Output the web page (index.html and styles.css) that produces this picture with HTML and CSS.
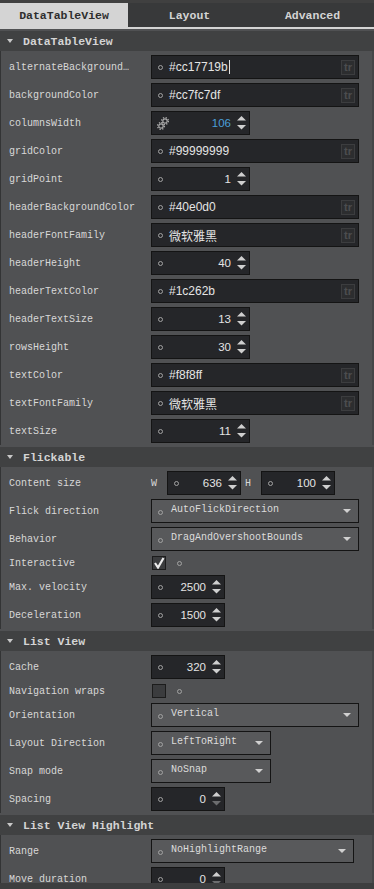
FILE: index.html
```html
<!DOCTYPE html>
<html lang="en">

<head>
    <meta charset="UTF-8">
    <meta name="viewport" content="width=device-width, initial-scale=1.0">
    <title>Properties</title>
    <link rel="stylesheet" href="styles.css">
</head>

<body>
    <div class="panel">
        <div class="tabs">
            <div class="tab active">DataTableView</div>
            <div class="tab">Layout</div>
            <div class="tab">Advanced</div>
        </div>

        <!-- DataTableView -->
        <div class="group">
            <div class="group-head"><span class="caret"></span>DataTableView</div>
            <div class="group-body">
                <div class="row">
                    <span class="label" title="alternateBackgroundColor">alternateBackground…</span>
                    <div class="field wide"><span class="dot"></span><span class="value">#cc17719b</span><span class="cursor"></span><span class="tr">tr</span></div>
                </div>
                <div class="row">
                    <span class="label">backgroundColor</span>
                    <div class="field wide"><span class="dot"></span><span class="value">#cc7fc7df</span><span class="tr">tr</span></div>
                </div>
                <div class="row">
                    <span class="label">columnsWidth</span>
                    <div class="field spin">
                        <svg class="link" width="12" height="13" viewBox="0 0 12 13">
                            <circle cx="8" cy="4" r="2.2" fill="none" stroke="#a8a8a8" stroke-width="1.2"/>
                            <circle cx="8" cy="4" r="3.4" fill="none" stroke="#a8a8a8" stroke-width="1.4" stroke-dasharray="1.3 1.4"/>
                            <circle cx="4" cy="9" r="2.2" fill="none" stroke="#a8a8a8" stroke-width="1.2"/>
                            <circle cx="4" cy="9" r="3.4" fill="none" stroke="#a8a8a8" stroke-width="1.4" stroke-dasharray="1.3 1.4"/>
                        </svg>
                        <span class="num bound">106</span>
                        <svg class="arrows" width="9" height="14" viewBox="0 0 9 14"><path d="M4.5 0 L9 4.5 H0 Z"/><path d="M0 9 H9 L4.5 13.5 Z"/></svg>
                    </div>
                </div>
                <div class="row">
                    <span class="label">gridColor</span>
                    <div class="field wide"><span class="dot"></span><span class="value">#99999999</span><span class="tr">tr</span></div>
                </div>
                <div class="row">
                    <span class="label">gridPoint</span>
                    <div class="field spin"><span class="dot"></span><span class="num">1</span>
                        <svg class="arrows" width="9" height="14" viewBox="0 0 9 14"><path d="M4.5 0 L9 4.5 H0 Z"/><path d="M0 9 H9 L4.5 13.5 Z"/></svg>
                    </div>
                </div>
                <div class="row">
                    <span class="label">headerBackgroundColor</span>
                    <div class="field wide"><span class="dot"></span><span class="value">#40e0d0</span><span class="tr">tr</span></div>
                </div>
                <div class="row">
                    <span class="label">headerFontFamily</span>
                    <div class="field wide"><span class="dot"></span><span class="value cjk">微软雅黑</span><span class="tr">tr</span></div>
                </div>
                <div class="row">
                    <span class="label">headerHeight</span>
                    <div class="field spin"><span class="dot"></span><span class="num">40</span>
                        <svg class="arrows" width="9" height="14" viewBox="0 0 9 14"><path d="M4.5 0 L9 4.5 H0 Z"/><path d="M0 9 H9 L4.5 13.5 Z"/></svg>
                    </div>
                </div>
                <div class="row">
                    <span class="label">headerTextColor</span>
                    <div class="field wide"><span class="dot"></span><span class="value">#1c262b</span><span class="tr">tr</span></div>
                </div>
                <div class="row">
                    <span class="label">headerTextSize</span>
                    <div class="field spin"><span class="dot"></span><span class="num">13</span>
                        <svg class="arrows" width="9" height="14" viewBox="0 0 9 14"><path d="M4.5 0 L9 4.5 H0 Z"/><path d="M0 9 H9 L4.5 13.5 Z"/></svg>
                    </div>
                </div>
                <div class="row">
                    <span class="label">rowsHeight</span>
                    <div class="field spin"><span class="dot"></span><span class="num">30</span>
                        <svg class="arrows" width="9" height="14" viewBox="0 0 9 14"><path d="M4.5 0 L9 4.5 H0 Z"/><path d="M0 9 H9 L4.5 13.5 Z"/></svg>
                    </div>
                </div>
                <div class="row">
                    <span class="label">textColor</span>
                    <div class="field wide"><span class="dot"></span><span class="value">#f8f8ff</span><span class="tr">tr</span></div>
                </div>
                <div class="row">
                    <span class="label">textFontFamily</span>
                    <div class="field wide"><span class="dot"></span><span class="value cjk">微软雅黑</span><span class="tr">tr</span></div>
                </div>
                <div class="row">
                    <span class="label">textSize</span>
                    <div class="field spin"><span class="dot"></span><span class="num">11</span>
                        <svg class="arrows" width="9" height="14" viewBox="0 0 9 14"><path d="M4.5 0 L9 4.5 H0 Z"/><path d="M0 9 H9 L4.5 13.5 Z"/></svg>
                    </div>
                </div>
            </div>
        </div>

        <!-- Flickable -->
        <div class="group">
            <div class="group-head"><span class="caret"></span>Flickable</div>
            <div class="group-body">
                <div class="row">
                    <span class="label">Content size</span>
                    <span class="axis">W</span>
                    <div class="field spin short"><span class="dot"></span><span class="num">636</span>
                        <svg class="arrows" width="9" height="14" viewBox="0 0 9 14"><path d="M4.5 0 L9 4.5 H0 Z"/><path d="M0 9 H9 L4.5 13.5 Z"/></svg>
                    </div>
                    <span class="axis gap">H</span>
                    <div class="field spin short"><span class="dot"></span><span class="num">100</span>
                        <svg class="arrows" width="9" height="14" viewBox="0 0 9 14"><path d="M4.5 0 L9 4.5 H0 Z"/><path d="M0 9 H9 L4.5 13.5 Z"/></svg>
                    </div>
                </div>
                <div class="row">
                    <span class="label">Flick direction</span>
                    <div class="field combo wide"><span class="dot"></span><span class="choice">AutoFlickDirection</span><span class="drop"></span></div>
                </div>
                <div class="row">
                    <span class="label">Behavior</span>
                    <div class="field combo wide"><span class="dot"></span><span class="choice">DragAndOvershootBounds</span><span class="drop"></span></div>
                </div>
                <div class="row check">
                    <span class="label">Interactive</span>
                    <span class="box">
                        <svg width="12" height="12" viewBox="0 0 12 12"><path d="M2 6 L5 10.5 L10.5 1" fill="none" stroke="#ececec" stroke-width="2.2"/></svg>
                    </span>
                    <span class="dot after"></span>
                </div>
                <div class="row">
                    <span class="label">Max. velocity</span>
                    <div class="field spin short"><span class="dot"></span><span class="num">2500</span>
                        <svg class="arrows" width="9" height="14" viewBox="0 0 9 14"><path d="M4.5 0 L9 4.5 H0 Z"/><path d="M0 9 H9 L4.5 13.5 Z"/></svg>
                    </div>
                </div>
                <div class="row">
                    <span class="label">Deceleration</span>
                    <div class="field spin short"><span class="dot"></span><span class="num">1500</span>
                        <svg class="arrows" width="9" height="14" viewBox="0 0 9 14"><path d="M4.5 0 L9 4.5 H0 Z"/><path d="M0 9 H9 L4.5 13.5 Z"/></svg>
                    </div>
                </div>
            </div>
        </div>

        <!-- List View -->
        <div class="group">
            <div class="group-head"><span class="caret"></span>List View</div>
            <div class="group-body">
                <div class="row">
                    <span class="label">Cache</span>
                    <div class="field spin short"><span class="dot"></span><span class="num">320</span>
                        <svg class="arrows" width="9" height="14" viewBox="0 0 9 14"><path d="M4.5 0 L9 4.5 H0 Z"/><path d="M0 9 H9 L4.5 13.5 Z"/></svg>
                    </div>
                </div>
                <div class="row check">
                    <span class="label">Navigation wraps</span>
                    <span class="box"></span>
                    <span class="dot after"></span>
                </div>
                <div class="row">
                    <span class="label">Orientation</span>
                    <div class="field combo wide"><span class="dot"></span><span class="choice">Vertical</span><span class="drop"></span></div>
                </div>
                <div class="row">
                    <span class="label">Layout Direction</span>
                    <div class="field combo mid"><span class="dot"></span><span class="choice">LeftToRight</span><span class="drop"></span></div>
                </div>
                <div class="row">
                    <span class="label">Snap mode</span>
                    <div class="field combo mid"><span class="dot"></span><span class="choice">NoSnap</span><span class="drop"></span></div>
                </div>
                <div class="row">
                    <span class="label">Spacing</span>
                    <div class="field spin short"><span class="dot"></span><span class="num">0</span>
                        <svg class="arrows at-min" width="9" height="14" viewBox="0 0 9 14"><path d="M4.5 0 L9 4.5 H0 Z"/><path class="off" d="M0 9 H9 L4.5 13.5 Z"/></svg>
                    </div>
                </div>
            </div>
        </div>

        <!-- List View Highlight -->
        <div class="group">
            <div class="group-head"><span class="caret"></span>List View Highlight</div>
            <div class="group-body">
                <div class="row">
                    <span class="label">Range</span>
                    <div class="field combo range"><span class="dot"></span><span class="choice">NoHighlightRange</span><span class="drop"></span></div>
                </div>
                <div class="row">
                    <span class="label">Move duration</span>
                    <div class="field spin short"><span class="dot"></span><span class="num">0</span>
                        <svg class="arrows" width="9" height="14" viewBox="0 0 9 14"><path d="M4.5 0 L9 4.5 H0 Z"/><path class="off" d="M0 9 H9 L4.5 13.5 Z"/></svg>
                    </div>
                </div>
            </div>
        </div>

        <div class="bottom-bar"></div>
    </div>
</body>

</html>
```

FILE: styles.css
```css
* {
    margin: 0;
    padding: 0;
    box-sizing: border-box;
}

body {
    background-color: #505153;
    font-family: "Liberation Mono", "DejaVu Sans Mono", monospace;
    font-size: 10px;
    color: #d8d8d8;
    overflow: hidden;
}

.panel {
    position: relative;
    width: 374px;
    height: 889px;
    overflow: hidden;
}

/* tab strip */
.tabs {
    display: grid;
    grid-template-columns: 128px 1fr 1fr;
    background-color: #404040;
    padding-top: 3px;
    border-bottom: 2px solid #d4d4d4;
}

.tab {
    height: 24px;
    display: flex;
    align-items: center;
    justify-content: center;
    background-color: #38393a;
    color: #d4d4d4;
    font-weight: bold;
    font-size: 11.5px;
}

.tab.active {
    background-color: #d4d4d4;
    color: #2e2e2e;
}

/* sections */
.group {
    margin-top: 2px;
}

.group-head {
    height: 20px;
    display: flex;
    align-items: center;
    padding-left: 7px;
    background-color: #404142;
    color: #d4d4d4;
    font-weight: bold;
    font-size: 11.5px;
}

.caret {
    width: 0;
    height: 0;
    border-left: 3px solid transparent;
    border-right: 3px solid transparent;
    border-top: 4px solid #c8c8c8;
    margin-right: 10px;
}

.group-body {
    padding-top: 2px;
    border-left: 1px solid #333435;
    border-right: 2px solid #454648;
}

.row {
    height: 28px;
    display: flex;
    align-items: center;
}

.row.check {
    height: 20px;
}

.label {
    width: 150px;
    padding-left: 8px;
    white-space: nowrap;
    overflow: hidden;
}

/* editors */
.field {
    height: 24px;
    display: flex;
    align-items: center;
    border: 1px solid #141414;
    background-color: #252629;
}

.field.wide {
    width: 208px;
}

.field.spin {
    width: 99px;
}

.field.spin.short {
    width: 74px;
}

.dot {
    width: 5px;
    height: 5px;
    margin-left: 6px;
    border: 1px solid #a2a2a2;
    border-radius: 50%;
    flex-shrink: 0;
}

.value {
    margin-left: 6px;
    font-family: "Liberation Sans", Arial, sans-serif;
    font-size: 12px;
    color: #e4e4e4;
}

.value.cjk {
    font-family: "Noto Sans CJK SC", sans-serif;
    font-size: 12px;
}

.cursor {
    width: 1px;
    height: 14px;
    margin-left: 1px;
    background-color: #e0e0e0;
}

.tr {
    margin-left: auto;
    margin-right: 3px;
    width: 14px;
    height: 15px;
    display: flex;
    align-items: center;
    justify-content: center;
    border: 1px solid #3c3d3f;
    background-color: #2c2d2f;
    color: #4c4d4f;
    font-family: "Liberation Sans", Arial, sans-serif;
    font-weight: bold;
    font-size: 11px;
    padding-bottom: 1px;
}

.num {
    flex: 1;
    text-align: right;
    margin-right: 6px;
    font-family: "Liberation Sans", Arial, sans-serif;
    font-size: 11.5px;
    color: #e4e4e4;
}

.num.bound {
    color: #4a9fd8;
}

.link {
    margin-left: 5px;
    flex-shrink: 0;
}

.arrows {
    margin-right: 3px;
    fill: #cfcfcf;
    flex-shrink: 0;
}

.arrows .off {
    fill: #6c6d6f;
}

.axis {
    width: 16px;
    padding-left: 0;
}

.axis.gap {
    margin-left: 4px;
}

/* combo boxes */
.field.combo {
    background-color: #58595b;
}

.field.combo.mid {
    width: 120px;
}

.field.combo.range {
    width: 203px;
}

.combo .dot {
    margin-top: 2px;
}

.choice {
    margin-left: 8px;
    padding-bottom: 3px;
    color: #dcdcdc;
    white-space: nowrap;
}

.drop {
    margin-left: auto;
    margin-right: 7px;
    width: 0;
    height: 0;
    border-left: 4px solid transparent;
    border-right: 4px solid transparent;
    border-top: 4px solid #d0d0d0;
}

/* checkbox */
.box {
    width: 14px;
    height: 14px;
    margin-left: 1px;
    display: flex;
    align-items: center;
    justify-content: center;
    border: 1px solid #1c1c1c;
    background-color: #3b3c3e;
}

.dot.after {
    margin-left: 11px;
}

.bottom-bar {
    position: absolute;
    left: 0;
    right: 0;
    bottom: 0;
    height: 6px;
    background-color: #3d3e3f;
}
```
